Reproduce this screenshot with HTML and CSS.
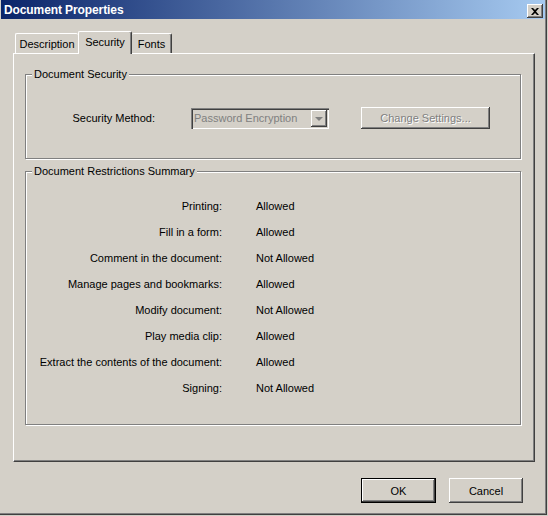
FILE: index.html
```html
<!DOCTYPE html>
<html>
<head>
<meta charset="utf-8">
<link rel="stylesheet" href="styles.css">
</head>
<body>
<div class="window">
  <div class="titlebar">
    <span class="title">Document Properties</span>
    <span class="close">
      <svg width="8" height="7" viewBox="0 0 8 7"><path d="M0 0h2l2 2 2-2h2L5 3.5 8 7H6L4 5 2 7H0l3-3.5z" fill="#000"/></svg>
    </span>
  </div>
  <div class="content">
    <div class="tabs">
      <div class="tab tab-desc">Description</div>
      <div class="tab tab-active">Security</div>
      <div class="tab tab-fonts">Fonts</div>
    </div>
    <div class="panel">
      <div class="group group-security">
        <span class="legend">Document Security</span>
        <div class="method-row">
          <span class="method-label">Security Method:</span>
          <div class="combo">
            <span class="combo-text">Password Encryption</span>
            <span class="combo-arrow"><span class="tri"></span></span>
          </div>
          <div class="btn btn-change disabled">Change Settings...</div>
        </div>
      </div>
      <div class="group group-summary">
        <span class="legend">Document Restrictions Summary</span>
        <div class="rows">
          <span class="lbl">Printing:</span><span class="val">Allowed</span>
          <span class="lbl">Fill in a form:</span><span class="val">Allowed</span>
          <span class="lbl">Comment in the document:</span><span class="val">Not Allowed</span>
          <span class="lbl">Manage pages and bookmarks:</span><span class="val">Allowed</span>
          <span class="lbl">Modify document:</span><span class="val">Not Allowed</span>
          <span class="lbl">Play media clip:</span><span class="val">Allowed</span>
          <span class="lbl">Extract the contents of the document:</span><span class="val">Allowed</span>
          <span class="lbl">Signing:</span><span class="val">Not Allowed</span>
        </div>
      </div>
    </div>
    <div class="footer">
      <div class="btn btn-ok">OK</div>
      <div class="btn btn-cancel">Cancel</div>
    </div>
  </div>
</div>
</body>
</html>
```
FILE: styles.css
```css
html, body {
  margin: 0;
  padding: 0;
  background: #d4d0c8;
}
body {
  font-family: "Liberation Sans", Arial, sans-serif;
  font-size: 11px;
  color: #000;
}
.window {
  width: 547px;
  height: 515px;
  box-sizing: border-box;
  padding-left: 1px;
  border-right: 1px solid #404040;
  border-bottom: 1px solid #404040;
  box-shadow: inset -1px -1px 0 #808080;
  display: flex;
  flex-direction: column;
}
.titlebar {
  height: 19px;
  box-sizing: border-box;
  margin-right: 1px;
  background: linear-gradient(to right, #0a246a, #a6caf0);
  display: flex;
  align-items: flex-start;
  justify-content: space-between;
  padding: 3px 2px 0 3px;
}
.title {
  color: #fff;
  font-weight: bold;
  font-size: 12px;
  line-height: 14px;
  letter-spacing: -0.1px;
}
.close {
  width: 16px;
  height: 14px;
  margin-top: 1px;
  box-sizing: border-box;
  background: #d4d0c8;
  box-shadow: inset -1px -1px 0 #404040, inset 1px 1px 0 #fff, inset -2px -2px 0 #808080;
  display: flex;
  align-items: center;
  justify-content: center;
  padding-right: 1px;
}
.content {
  padding: 12px 12px 0 12px;
  display: flex;
  flex-direction: column;
}
.tabs {
  display: flex;
  align-items: flex-end;
  height: 22px;
  padding-left: 2px;
  position: relative;
  z-index: 1;
}
.tab {
  height: 20px;
  box-sizing: border-box;
  border-top: 1px solid #fff;
  border-left: 1px solid #fff;
  border-right: 1px solid #404040;
  box-shadow: inset -1px 0 0 #808080;
  border-top-left-radius: 2px;
  border-top-right-radius: 2px;
  display: flex;
  align-items: center;
  justify-content: center;
  padding-top: 1px;
  background: #d4d0c8;
}
.tab-desc {
  width: 63px;
  border-right: none;
  box-shadow: none;
}
.tab-active {
  width: 54px;
  height: 23px;
  margin-bottom: -1px;
  padding-bottom: 3px;
}
.tab-fonts {
  width: 40px;
  border-left: none;
}
.panel {
  width: 522px;
  height: 409px;
  box-sizing: border-box;
  border-top: 1px solid #fff;
  border-left: 1px solid #fff;
  border-right: 1px solid #404040;
  border-bottom: 1px solid #404040;
  box-shadow: inset -1px -1px 0 #808080;
  padding: 20px 0 0 11px;
  display: flex;
  flex-direction: column;
  gap: 12px;
}
.group {
  position: relative;
  width: 496px;
  box-sizing: border-box;
  border: 1px solid #808080;
  box-shadow: inset 1px 1px 0 #fff, 1px 1px 0 #fff;
}
.group-security {
  height: 85px;
}
.group-summary {
  height: 254px;
}
.legend {
  position: absolute;
  top: -7px;
  left: 6px;
  padding: 0 2px;
  background: #d4d0c8;
  line-height: 13px;
}
.method-row {
  display: flex;
  align-items: center;
  margin-top: 32px;
}
.method-label {
  width: 129px;
  text-align: right;
  margin-right: 36px;
}
.combo {
  width: 138px;
  height: 21px;
  box-sizing: border-box;
  box-shadow: inset 1px 1px 0 #808080, inset 2px 2px 0 #404040, inset -1px -1px 0 #fff, inset -2px -2px 0 #d4d0c8;
  display: flex;
  align-items: center;
  justify-content: space-between;
  padding: 2px 2px 2px 3px;
  margin-right: 32px;
}
.combo-text {
  color: #808080;
}
.combo-arrow {
  width: 16px;
  height: 17px;
  box-sizing: border-box;
  box-shadow: inset -1px -1px 0 #404040, inset 1px 1px 0 #fff, inset -2px -2px 0 #808080;
  display: flex;
  align-items: center;
  justify-content: center;
}
.tri {
  width: 0;
  height: 0;
  border-left: 4px solid transparent;
  border-right: 4px solid transparent;
  border-top: 4px solid #808080;
  margin-top: 1px;
}
.btn {
  height: 25px;
  box-sizing: border-box;
  box-shadow: inset -1px -1px 0 #404040, inset 1px 1px 0 #fff, inset -2px -2px 0 #808080;
  display: flex;
  align-items: center;
  justify-content: center;
  background: #d4d0c8;
}
.btn-change {
  width: 129px;
  height: 22px;
}
.disabled {
  color: #808080;
  text-shadow: 1px 1px 0 #fff;
}
.rows {
  display: grid;
  grid-template-columns: 196px auto;
  column-gap: 34px;
  grid-auto-rows: 26px;
  align-items: center;
  margin-top: 21px;
}
.lbl {
  text-align: right;
}
.footer {
  display: flex;
  justify-content: flex-end;
  gap: 13px;
  margin-top: 16px;
  padding-right: 11px;
}
.btn-ok {
  width: 75px;
  border: 1px solid #000;
}
.btn-cancel {
  width: 74px;
}
```
